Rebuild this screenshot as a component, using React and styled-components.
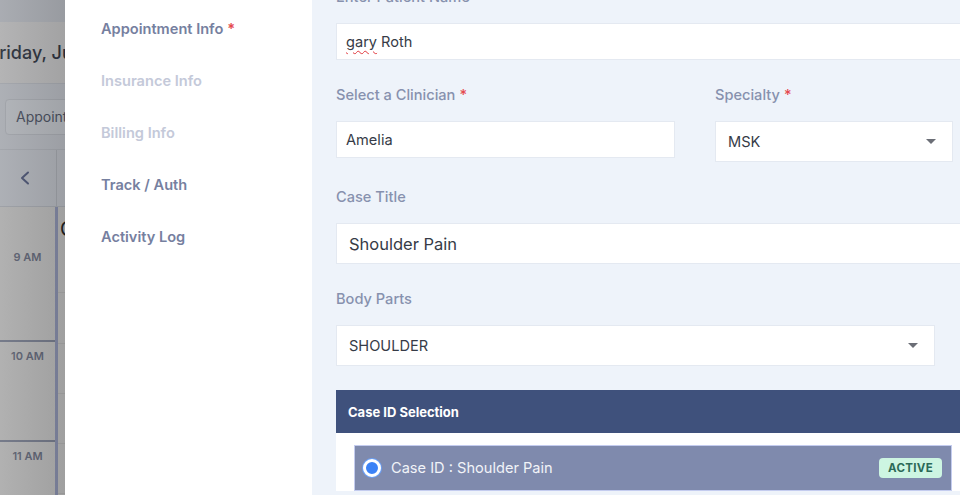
import React from 'react'
import styled, { createGlobalStyle } from 'styled-components'

const GlobalStyle = createGlobalStyle`
  html, body {
    margin: 0;
    padding: 0;
    background: #fff;
    font-family: Inter, "Noto Sans", sans-serif;
  }
`

const Page = styled.div`
  display: flex;
  width: 960px;
  height: 495px;
  overflow: hidden;
`

/* ---------- calendar behind the drawer ---------- */

const Backdrop = styled.div`
  position: relative;
  width: 65px;
  flex-shrink: 0;
  overflow: hidden;
  background: #adadad;
`

const Calendar = styled.div`
  width: 320px;
  display: flex;
  flex-direction: column;
`

const TopStrip = styled.div`
  height: 22px;
  background: #a5a8ae;
`

const TitleBar = styled.div`
  height: 61px;
  display: flex;
  align-items: center;
  margin-left: -11px;
  font-size: 18px;
  font-weight: 500;
  color: #2c313c;
  background: #b0b0b1;
`

const Toolbar = styled.div`
  height: 65px;
  display: flex;
  align-items: center;
  padding-left: 5px;
  background: #a9acb2;
  border-top: 1px solid #a0a3a9;
`

const ToolButton = styled.div`
  height: 34px;
  display: flex;
  align-items: center;
  padding: 0 10px;
  border: 1px solid #9ea1a7;
  border-radius: 4px;
  background: #aeb1b6;
  font-size: 14px;
  color: #464c5a;
  white-space: nowrap;
`

const NavRow = styled.div`
  height: 56px;
  display: flex;
  border-top: 1px solid #9fa2a8;
  background: #a9acb2;
`

const NavCell = styled.div`
  width: 57px;
  display: flex;
  align-items: center;
  justify-content: center;
  padding-right: 6px;
  box-sizing: border-box;
  border-right: 1px solid #999ca2;
  color: #4a5270;
`

const Grid = styled.div`
  display: flex;
  border-top: 1px solid #9a9da3;
`

const TimeCol = styled.div`
  width: 55px;
  display: flex;
  flex-direction: column;
  border-right: 3px solid #7e849f;
`

const Slot = styled.div`
  height: ${p => p.h}px;
  display: flex;
  justify-content: center;
  padding-top: ${p => p.pad}px;
  box-sizing: border-box;
  border-bottom: 2px solid #6f7484;
  font-size: 11px;
  font-weight: 600;
  color: #5b6070;
`

const DayCol = styled.div`
  flex: 1;
  display: flex;
  flex-direction: column;
`

const HalfSlot = styled.div`
  height: ${p => p.h}px;
  border-bottom: 1px solid #a2a2a2;
  box-sizing: border-box;
  padding: 10px 0 0 2px;
  font-size: 20px;
  color: #202020;
`

const Shade = styled.div`
  position: absolute;
  inset: 0;
  background: linear-gradient(to right, rgba(255, 255, 255, 0.05), rgba(0, 0, 0, 0.08));
  pointer-events: none;
`

/* ---------- drawer ---------- */

const Drawer = styled.div`
  flex: 1;
  display: flex;
  min-width: 0;
  background: #fff;
`

const SideNav = styled.nav`
  width: 247px;
  flex-shrink: 0;
  display: flex;
  flex-direction: column;
  padding: 3px 0 0 36px;
  box-sizing: border-box;
`

const NavItem = styled.div`
  height: 52px;
  display: flex;
  align-items: center;
  font-size: 14.6px;
  font-weight: 600;
  color: ${p => (p.muted ? '#c4c9d9' : '#76809f')};
`

const Star = styled.span`
  color: #e5484d;
  margin-left: 4px;
`

const FormPane = styled.div`
  flex: 1;
  min-width: 0;
  background: #eef3fa;
  padding-left: 24px;
  overflow: hidden;
`

const FormInner = styled.div`
  width: 720px;
  margin-top: -13px;
  display: flex;
  flex-direction: column;
`

const Field = styled.div`
  display: flex;
  flex-direction: column;
  width: ${p => p.w}px;
  margin-bottom: 25px;
`

const Row = styled.div`
  display: flex;
  gap: 40px;
  align-items: flex-start;
`

const Label = styled.div`
  line-height: 20px;
  margin-bottom: 16px;
  font-size: 14.6px;
  font-weight: 500;
  color: #8791ae;
`

const Input = styled.div`
  height: ${p => p.h || 37}px;
  display: flex;
  align-items: center;
  padding: 0 ${p => (p.big ? 12 : 9)}px;
  box-sizing: border-box;
  background: #fff;
  border: 1px solid #e4e9f1;
  font-size: ${p => (p.big ? 16.5 : 14.6)}px;
  color: #363b47;
`

const SelectBox = styled(Input)`
  justify-content: space-between;
  padding-right: 16px;
  padding-left: 12px;
`

const Spell = styled.span`
  text-decoration: underline wavy #e0393e;
  text-decoration-thickness: 1px;
  text-underline-offset: 3px;
  margin-right: 4px;
`

const Caret = styled.span`
  width: 0;
  height: 0;
  border-left: 5px solid transparent;
  border-right: 5px solid transparent;
  border-top: 5px solid #6b6e76;
`

const CaseCard = styled.div`
  display: flex;
  flex-direction: column;
  margin-top: -1px;
`

const CaseHeader = styled.div`
  height: 43px;
  display: flex;
  align-items: center;
  padding-left: 12px;
  background: #3f517c;
  color: #fff;
  font-size: 13px;
  font-weight: 700;
`

const CaseBody = styled.div`
  background: #fff;
  padding: 12px 0 0 18px;
`

const CaseItem = styled.div`
  width: 596px;
  border: 1px solid #c4ccef;
  background: #eef3fb;
`

const CaseItemHead = styled.div`
  height: 44px;
  display: flex;
  align-items: center;
  padding: 0 9px 0 8px;
  background: #7f8aad;
  color: #f1f3f8;
  font-size: 14.6px;
`

const Radio = styled.span`
  width: 12px;
  height: 12px;
  border-radius: 50%;
  background: #3c82f6;
  border: 3px solid #fff;
  box-shadow: 0 0 0 1px #6aa0f8;
  margin-right: 10px;
  flex-shrink: 0;
`

const Badge = styled.span`
  margin-left: auto;
  padding: 3px 9px;
  border-radius: 4px;
  background: #cdf5e2;
  color: #2b6a57;
  font-size: 11.5px;
  font-weight: 700;
  letter-spacing: 0.3px;
`

const Chevron = () => (
  <svg width="12" height="14" viewBox="0 0 12 14" fill="none">
    <path d="M9 1.5L3 7l6 5.5" stroke="currentColor" strokeWidth="2" strokeLinecap="round" strokeLinejoin="round" />
  </svg>
)

const navItems = [
  { label: 'Appointment Info', required: true },
  { label: 'Insurance Info', muted: true },
  { label: 'Billing Info', muted: true },
  { label: 'Track / Auth' },
  { label: 'Activity Log' },
]

const App = () => {
  return (
    <>
      <GlobalStyle />
      <Page>
        <Backdrop>
          <Calendar>
            <TopStrip />
            <TitleBar>Friday, June 14</TitleBar>
            <Toolbar>
              <ToolButton>Appointments</ToolButton>
            </Toolbar>
            <NavRow>
              <NavCell>
                <Chevron />
              </NavCell>
            </NavRow>
            <Grid>
              <TimeCol>
                <Slot h={135} pad={43}>9 AM</Slot>
                <Slot h={100} pad={7}>10 AM</Slot>
                <Slot h={100} pad={7}>11 AM</Slot>
              </TimeCol>
              <DayCol>
                <HalfSlot h={86}>G</HalfSlot>
                <HalfSlot h={51} />
                <HalfSlot h={50} />
                <HalfSlot h={50} />
                <HalfSlot h={50} />
              </DayCol>
            </Grid>
          </Calendar>
          <Shade />
        </Backdrop>

        <Drawer>
          <SideNav>
            {navItems.map(item => (
              <NavItem key={item.label} muted={item.muted}>
                {item.label}
                {item.required && <Star>*</Star>}
              </NavItem>
            ))}
          </SideNav>

          <FormPane>
            <FormInner>
              <Field w={720}>
                <Label>Enter Patient Name</Label>
                <Input>
                  <Spell>gary</Spell>Roth
                </Input>
              </Field>

              <Row>
                <Field w={339}>
                  <Label>
                    Select a Clinician<Star>*</Star>
                  </Label>
                  <Input>Amelia</Input>
                </Field>
                <Field w={238}>
                  <Label>
                    Specialty<Star>*</Star>
                  </Label>
                  <SelectBox h={41}>
                    MSK
                    <Caret />
                  </SelectBox>
                </Field>
              </Row>

              <Field w={720}>
                <Label>Case Title</Label>
                <Input h={41} big>
                  Shoulder Pain
                </Input>
              </Field>

              <Field w={599}>
                <Label>Body Parts</Label>
                <SelectBox h={41}>
                  SHOULDER
                  <Caret />
                </SelectBox>
              </Field>

              <CaseCard>
                <CaseHeader>Case ID Selection</CaseHeader>
                <CaseBody>
                  <CaseItem>
                    <CaseItemHead>
                      <Radio />
                      Case ID : Shoulder Pain
                      <Badge>ACTIVE</Badge>
                    </CaseItemHead>
                  </CaseItem>
                </CaseBody>
              </CaseCard>
            </FormInner>
          </FormPane>
        </Drawer>
      </Page>
    </>
  )
}

export default App
